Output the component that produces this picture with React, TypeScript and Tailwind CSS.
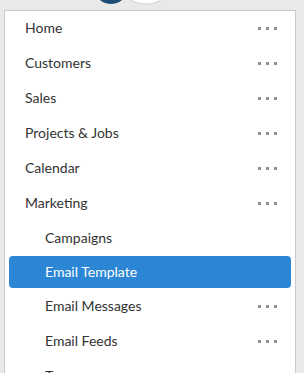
import React from "react";

type Item = { label: string; sub?: boolean; dots?: boolean; active?: boolean };

const items: Item[] = [
  { label: "Home", dots: true },
  { label: "Customers", dots: true },
  { label: "Sales", dots: true },
  { label: "Projects & Jobs", dots: true },
  { label: "Calendar", dots: true },
  { label: "Marketing", dots: true },
  { label: "Campaigns", sub: true },
  { label: "Email Template", sub: true, active: true },
  { label: "Email Messages", sub: true, dots: true },
  { label: "Email Feeds", sub: true, dots: true },
  { label: "Tags", sub: true },
];

function Dots() {
  return (
    <div className="flex gap-[5px] items-center pt-[2px]">
      <span className="w-[3px] h-[3px] bg-[#909090] block" />
      <span className="w-[3px] h-[3px] bg-[#909090] block" />
      <span className="w-[3px] h-[3px] bg-[#909090] block" />
    </div>
  );
}

export default function App() {
  return (
    <div
      className="w-[304px] h-[373px] overflow-hidden bg-[#e9e9e9]"
      style={{ fontFamily: 'Lato, "Noto Sans", sans-serif' }}
    >
      <div className="h-[10px]">
        <svg width="304" height="10" className="block">
          <ellipse cx="146" cy="-11" rx="22" ry="15" fill="#ffffff" stroke="#d4d4d4" strokeWidth="1" />
          <ellipse cx="111" cy="-9" rx="15" ry="13" fill="#1f4e79" />
        </svg>
      </div>
      <div className="ml-[4px] w-[292px] h-[400px] bg-white border border-[#cacaca]">
        <div className="flex flex-col">
          {items.map((it) =>
            it.active ? (
              <div key={it.label} className="h-[33px] pb-[1px] px-[4px]">
                <div className="h-[32px] rounded-[4px] bg-[#2b86d5] flex items-center pb-[2px] pl-[36px] text-white text-[14px]">
                  {it.label}
                </div>
              </div>
            ) : (
              <div
                key={it.label}
                className={`h-[35px] flex items-center justify-between pb-[2px] pr-[18px] text-[14px] text-[#333333] ${
                  it.sub ? "pl-[40px]" : "pl-[20px]"
                }`}
              >
                <span>{it.label}</span>
                {it.dots && <Dots />}
              </div>
            )
          )}
        </div>
      </div>
    </div>
  );
}
